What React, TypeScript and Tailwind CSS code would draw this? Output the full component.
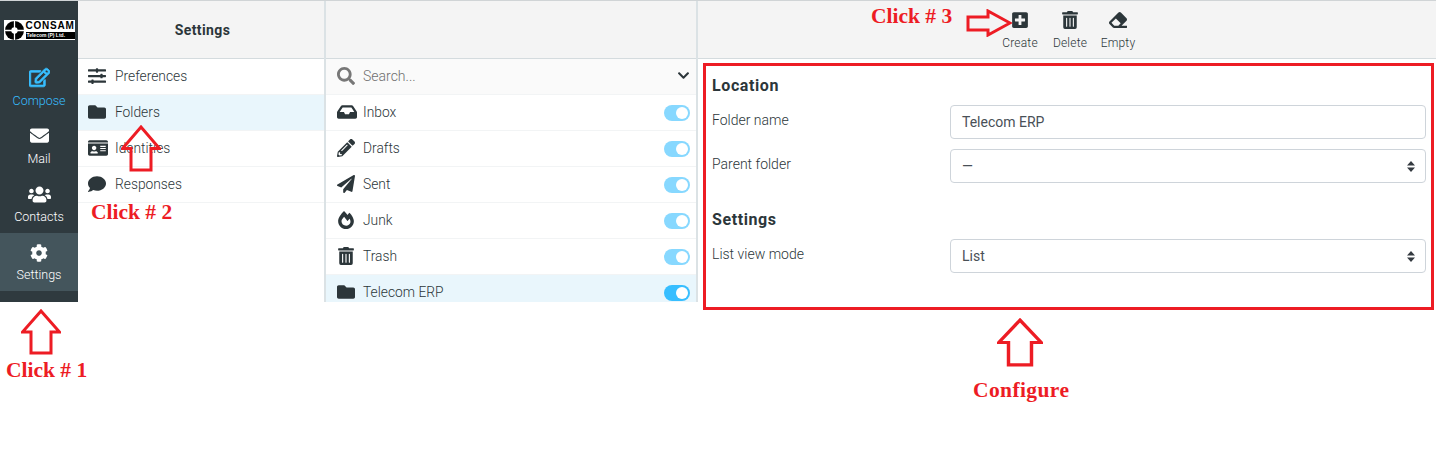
import type { ReactNode } from "react";
import {
  FaRegEdit,
  FaEnvelope,
  FaUsers,
  FaCog,
  FaSlidersH,
  FaFolder,
  FaIdCard,
  FaComment,
  FaSearch,
  FaChevronDown,
  FaInbox,
  FaPencilAlt,
  FaPaperPlane,
  FaFireAlt,
  FaTrashAlt,
  FaPlusSquare,
  FaEraser,
} from "react-icons/fa";

const navItems = [
  { label: "Compose", icon: <FaRegEdit size={21} stroke="currentColor" strokeWidth={20} />, className: "text-[#37beff]" },
  { label: "Mail", icon: <FaEnvelope size={19} className="mb-[1px]" />, className: "text-white" },
  { label: "Contacts", icon: <FaUsers size={23} className="translate-y-[2px]" />, className: "text-white" },
  { label: "Settings", icon: <FaCog size={18} />, className: "text-white bg-[#44555c]" },
];

const sections = [
  { label: "Preferences", icon: <FaSlidersH size={18} /> },
  { label: "Folders", icon: <FaFolder size={18} />, active: true },
  { label: "Identities", icon: <FaIdCard size={20} /> },
  { label: "Responses", icon: <FaComment size={18} /> },
];

const folders = [
  { label: "Inbox", icon: <FaInbox size={20} /> },
  { label: "Drafts", icon: <FaPencilAlt size={18} /> },
  { label: "Sent", icon: <FaPaperPlane size={18} /> },
  { label: "Junk", icon: <FaFireAlt size={18} /> },
  { label: "Trash", icon: <FaTrashAlt size={18} /> },
  { label: "Telecom ERP", icon: <FaFolder size={18} />, active: true },
];

const SelectArrows = () => (
  <svg width="8" height="11" viewBox="0 0 8 11" className="text-[#343a40]">
    <path d="M4 0 8 4.500H0z M4 11 0 6.500h8z" fill="currentColor" />
  </svg>
);

const Field = ({ label, value, select }: { label: string; value: string; select?: boolean }) => (
  <div className="flex items-start">
    <label className="w-[238px] shrink-0 pt-[5px] text-sm leading-5 font-light">{label}</label>
    <div className="flex h-[34px] flex-1 items-center justify-between rounded border border-[#ced4da] bg-white pl-[11px] pr-[10px] text-sm text-[#495057]">
      <span>{value}</span>
      {select && <SelectArrows />}
    </div>
  </div>
);

const Toolbtn = ({ icon, label, className }: { icon: ReactNode; label: string; className: string }) => (
  <div className={"flex flex-col items-center " + className}>
    <span className="flex h-[22px] items-center">{icon}</span>
    <span className="mt-[4px] text-xs leading-[16px] tracking-[0.2px] font-light">{label}</span>
  </div>
);

const UpArrow = ({ className }: { className: string }) => (
  <svg viewBox="0 0 40 46" preserveAspectRatio="none" className={"absolute " + className}>
    <path d="M20 2 38.500 23H30V44H10V23H1.500z" fill="none" stroke="#ed1c24" strokeWidth="3" />
  </svg>
);

const Note = ({ className, children }: { className: string; children: ReactNode }) => (
  <span className={"absolute whitespace-nowrap font-['Liberation_Serif',serif] text-[21.500px] font-bold leading-6 text-[#ed1c24] " + className}>
    {children}
  </span>
);

export default function App() {
  return (
    <div className="relative h-[450px] w-[1436px] overflow-hidden bg-white font-['Roboto',sans-serif] text-[#2c363a]">
      <div className="flex h-[302px] overflow-hidden border-t border-[#d0d4d6]">
        <aside className="flex w-[78px] shrink-0 flex-col bg-[#2f3a3f]">
          <div className="flex h-[58px] shrink-0 items-center justify-center">
            <div className="flex h-5 w-[71px] items-center gap-[2px] bg-white px-[1px]">
              <svg width="19" height="19" viewBox="0 0 18 18" className="shrink-0">
                <circle cx="9" cy="9" r="9" fill="black" />
                <path d="M9 0v18M0 9h18" stroke="white" strokeWidth="1.200" />
                <circle cx="9" cy="9" r="3" fill="white" />
              </svg>
              <div className="flex flex-col font-['Liberation_Sans',sans-serif] font-bold leading-none text-black">
                <span className="text-[10px] leading-[10px] tracking-[0.800px]">CONSAM</span>
                <span className="mt-[1px] whitespace-nowrap bg-black px-[1px] text-[5px] leading-[7px] text-white">Telecom (P) Ltd.</span>
              </div>
            </div>
          </div>
          {navItems.map((item) => (
            <div key={item.label} className={"flex h-[58px] shrink-0 flex-col items-center " + item.className}>
              <span className="flex h-[31px] items-end justify-center pb-[2px]">{item.icon}</span>
              <span className="mt-[1px] text-[12.500px] leading-5 font-light">{item.label}</span>
            </div>
          ))}
        </aside>

        <section className="w-[248px] shrink-0 border-r-2 border-[#dbe2e5]">
          <div className="flex h-[58px] items-center justify-center border-b border-[#d4dbde] bg-[#f4f4f4] pl-[3px] text-sm font-bold tracking-[0.400px]">
            Settings
          </div>
          {sections.map((item) => (
            <div
              key={item.label}
              className={
                "flex h-9 items-center border-b border-[#f2f4f5] pb-[1px] pl-[10px] text-[13.800px] font-light " +
                (item.active ? "bg-[#e9f6fc]" : "bg-white")
              }
            >
              <span className="flex w-[27px] shrink-0 items-center">{item.icon}</span>
              {item.label}
            </div>
          ))}
        </section>

        <section className="w-[372px] shrink-0 overflow-hidden border-r-2 border-[#dbe2e5]">
          <div className="h-[58px] border-b border-[#d4dbde] bg-[#f4f4f4]" />
          <div className="flex h-9 items-center justify-between border-b border-[#f2f4f5] bg-[#fafafa] pb-[2px] pl-[11px] pr-[6px] text-sm font-light text-[#6f6f6f]">
            <span className="flex items-center">
              <span className="flex w-[26px] items-center text-[#777]">
                <FaSearch size={18} />
              </span>
              Search...
            </span>
            <FaChevronDown size={13} className="text-[#2c363a]" />
          </div>
          {folders.map((item) => (
            <div
              key={item.label}
              className={
                "flex h-9 items-center justify-between border-b border-[#f2f4f5] pl-[11px] pr-[6px] text-[13.800px] font-light " +
                (item.active ? "bg-[#e9f6fc]" : "bg-white")
              }
            >
              <span className="flex items-center pb-[1px]">
                <span className="flex w-[26px] shrink-0 items-center">{item.icon}</span>
                {item.label}
              </span>
              <span
                className={
                  "flex h-4 w-[26px] items-center justify-end rounded-full pr-[2px] " +
                  (item.active ? "bg-[#37beff]" : "bg-[#87d8ff]")
                }
              >
                <span className="h-3 w-3 rounded-full bg-white" />
              </span>
            </div>
          ))}
        </section>

        <main className="flex-1">
          <div className="flex h-[58px] border-b border-[#d4dbde] bg-[#f4f4f4] pt-2">
            <Toolbtn icon={<FaPlusSquare size={18} />} label="Create" className="ml-[299px] w-[46px]" />
            <Toolbtn icon={<FaTrashAlt size={18} />} label="Delete" className="ml-[4px] w-[46px]" />
            <Toolbtn icon={<FaEraser size={18} />} label="Empty" className="ml-[2px] w-[46px]" />
          </div>
          <div className="px-[14px] pr-[10px] pt-[17px]">
            <h2 className="text-base font-bold leading-5 tracking-[0.600px]">Location</h2>
            <div className="mt-[9px] flex flex-col gap-[10px]">
              <Field label="Folder name" value="Telecom ERP" />
              <Field label="Parent folder" value="—" select />
            </div>
            <h2 className="mt-[27px] text-base font-bold leading-5 tracking-[0.600px]">Settings</h2>
            <div className="mt-[9px]">
              <Field label="List view mode" value="List" select />
            </div>
          </div>
        </main>
      </div>

      <div className="absolute left-[703px] top-[63px] h-[247px] w-[731px] border-[3px] border-[#ed1c24]" />
      <UpArrow className="left-[21px] top-[309px] h-[46px] w-[40px]" />
      <UpArrow className="left-[121px] top-[125px] h-[47px] w-[40px]" />
      <UpArrow className="left-[997px] top-[318px] h-[49px] w-[46px]" />
      <svg width="46" height="28" viewBox="0 0 46 28" className="absolute left-[966px] top-[9px]">
        <path d="M2 8H22V2L44 14 22 26V21H2z" fill="none" stroke="#ed1c24" strokeWidth="3" />
      </svg>
      <Note className="left-[6px] top-[358px]">Click # 1</Note>
      <Note className="left-[91px] top-[200px]">Click # 2</Note>
      <Note className="left-[871px] top-[4px]">Click # 3</Note>
      <Note className="left-[973px] top-[378px] tracking-[0.400px]">Configure</Note>
    </div>
  );
}
